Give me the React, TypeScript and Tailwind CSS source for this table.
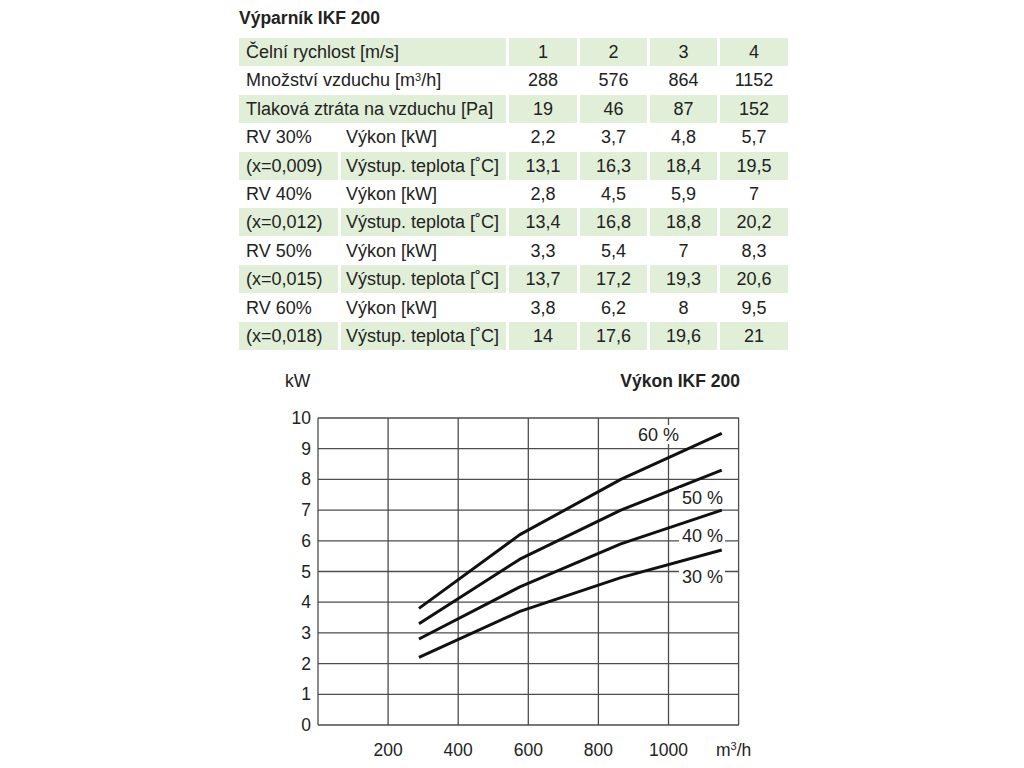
import React from "react";

const font = { fontFamily: '"Liberation Sans", Arial, Helvetica, sans-serif' };

type Row = { a: string; b?: string; vals: string[]; green: boolean };

const rows: Row[] = [
  { a: "Čelní rychlost [m/s]", vals: ["1", "2", "3", "4"], green: true },
  { a: "Množství vzduchu [m³/h]", vals: ["288", "576", "864", "1152"], green: false },
  { a: "Tlaková ztráta na vzduchu [Pa]", vals: ["19", "46", "87", "152"], green: true },
  { a: "RV 30%", b: "Výkon [kW]", vals: ["2,2", "3,7", "4,8", "5,7"], green: false },
  { a: "(x=0,009)", b: "Výstup. teplota [˚C]", vals: ["13,1", "16,3", "18,4", "19,5"], green: true },
  { a: "RV 40%", b: "Výkon [kW]", vals: ["2,8", "4,5", "5,9", "7"], green: false },
  { a: "(x=0,012)", b: "Výstup. teplota [˚C]", vals: ["13,4", "16,8", "18,8", "20,2"], green: true },
  { a: "RV 50%", b: "Výkon [kW]", vals: ["3,3", "5,4", "7", "8,3"], green: false },
  { a: "(x=0,015)", b: "Výstup. teplota [˚C]", vals: ["13,7", "17,2", "19,3", "20,6"], green: true },
  { a: "RV 60%", b: "Výkon [kW]", vals: ["3,8", "6,2", "8", "9,5"], green: false },
  { a: "(x=0,018)", b: "Výstup. teplota [˚C]", vals: ["14", "17,6", "19,6", "21"], green: true },
];

const flows = [288, 576, 864, 1152];
const curves = [
  { name: "60", v: [3.8, 6.2, 8, 9.5] },
  { name: "50", v: [3.3, 5.4, 7, 8.3] },
  { name: "40", v: [2.8, 4.5, 5.9, 7] },
  { name: "30", v: [2.2, 3.7, 4.8, 5.7] },
];

const X = (m: number) => 318 + m * 0.3505;
const Y = (k: number) => 727 - k * 30.7;

function Chart() {
  const grid = "#4d4d4d";
  return (
    <svg width="500" height="400" viewBox="270 368 500 400" className="block" style={font}>
      {Array.from({ length: 11 }, (_, i) => (
        <line key={"h" + i} x1={318} x2={739} y1={Y(i)} y2={Y(i)} stroke={grid} strokeWidth={1.3} />
      ))}
      {[0, 200, 400, 600, 800, 1000, 1200].map((m) => (
        <line key={"v" + m} x1={X(m)} x2={X(m)} y1={Y(10)} y2={Y(0)} stroke={grid} strokeWidth={1.3} />
      ))}
      {Array.from({ length: 11 }, (_, i) => (
        <text key={"yl" + i} x={311} y={Y(i) + 6} fontSize={17.5} textAnchor="end" fill="#222">
          {i}
        </text>
      ))}
      {[200, 400, 600, 800, 1000].map((m) => (
        <text key={"xl" + m} x={X(m)} y={758} fontSize={17.5} textAnchor="middle" fill="#222">
          {m}
        </text>
      ))}
      <text x={716} y={758} fontSize={17.5} fill="#222">
        m<tspan fontSize={11} dy={-6}>3</tspan>
        <tspan dy={6}>/h</tspan>
      </text>
      <text x={285} y={389} fontSize={17.5} fill="#222">kW</text>
      <text x={740} y={389} fontSize={17.5} fontWeight="bold" textAnchor="end" fill="#222">
        Výkon IKF 200
      </text>
      {curves.map((c) => (
        <polyline
          key={c.name}
          points={c.v.map((k, i) => `${X(flows[i])},${Y(k)}`).join(" ")}
          fill="none"
          stroke="#111"
          strokeWidth={3}
          strokeLinejoin="round"
        />
      ))}
      <rect x={636} y={427} width={46} height={19} fill="white" />
      <text x={638} y={443} fontSize={18} fill="#222">60 %</text>
      <rect x={679} y={490} width={46} height={19} fill="white" />
      <text x={682} y={506} fontSize={18} fill="#222">50 %</text>
      <rect x={679} y={528} width={46} height={19} fill="white" />
      <text x={682} y={544} fontSize={18} fill="#222">40 %</text>
      <rect x={679} y={569} width={46} height={19} fill="white" />
      <text x={682} y={585} fontSize={18} fill="#222">30 %</text>
    </svg>
  );
}

export default function App() {
  return (
    <div className="w-[1024px] h-[768px] bg-white text-[#222] overflow-hidden" style={font}>
      <div className="ml-[239px] pt-[7px]">
        <div className="text-[17.5px] font-bold leading-[22px] h-[31px]">Výparník IKF 200</div>
        <div className="grid grid-cols-[99px_165px_68px_67px_67px_68px] gap-x-[3px] gap-y-[0.4px] auto-rows-[28px] text-[18px] leading-[28px]">
          {rows.map((r, ri) => {
            const bg = r.green ? "bg-[#e1efd9]" : "bg-white";
            return (
              <React.Fragment key={ri}>
                {r.b === undefined ? (
                  <div className={`col-span-2 ${bg} pl-[7px] whitespace-nowrap`}>
                    {r.a.includes("m³") ? (
                      <>
                        Množství vzduchu [m<span className="relative -top-[5px] text-[11px]">3</span>/h]
                      </>
                    ) : (
                      r.a
                    )}
                  </div>
                ) : (
                  <>
                    <div className={`${bg} pl-[7px] whitespace-nowrap`}>{r.a}</div>
                    <div className={`${bg} pl-[5px] whitespace-nowrap`}>{r.b}</div>
                  </>
                )}
                {r.vals.map((v, vi) => (
                  <div key={vi} className={`${bg} text-center`}>
                    {v}
                  </div>
                ))}
              </React.Fragment>
            );
          })}
        </div>
        <div className="ml-[31px] mt-[16px]">
          <Chart />
        </div>
      </div>
    </div>
  );
}
